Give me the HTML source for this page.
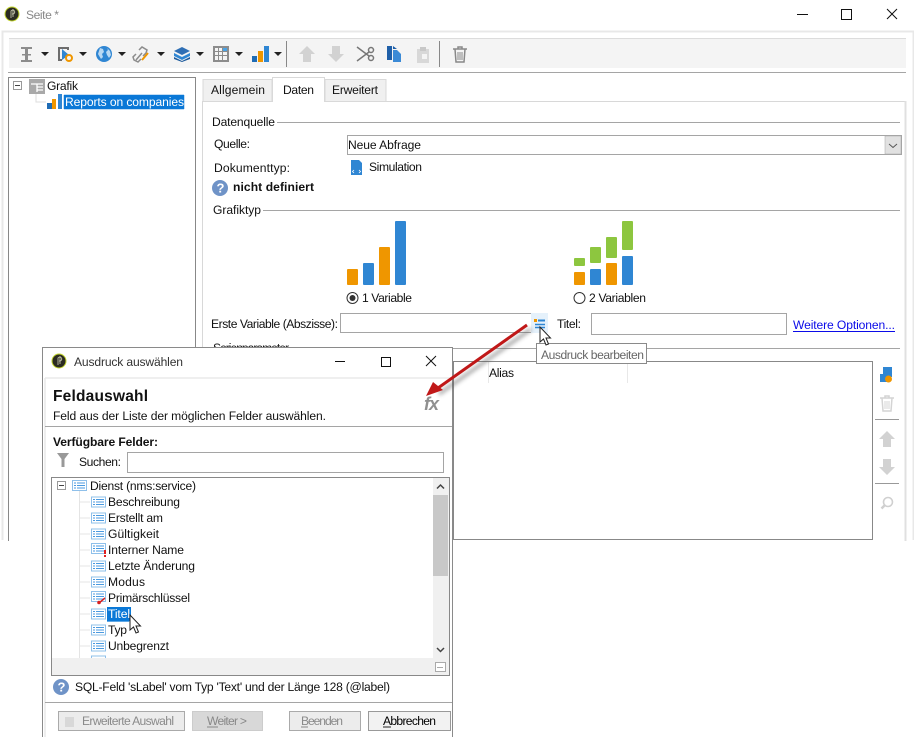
<!DOCTYPE html>
<html lang="de"><head><meta charset="utf-8"><title>Seite</title>
<style>
html,body{margin:0;padding:0;background:#fff;width:914px;height:737px;overflow:hidden}
svg{display:block;position:absolute;left:0;top:0}
text{font-family:"Liberation Sans",sans-serif;font-size:12.1px;fill:#111}
.b{font-weight:bold}
.g{fill:#888}
</style></head><body>
<svg width="914" height="737" viewBox="0 0 914 737" xmlns="http://www.w3.org/2000/svg">
<defs>
<filter id="sh" x="-20%" y="-20%" width="140%" height="140%"><feGaussianBlur stdDeviation="2"/></filter>
<g id="li"><rect x=".5" y=".5" width="14" height="10" fill="#fff" stroke="#8fc0ea"/><path d="M2 3h2M2 5.500h2M2 8h2M5 3h8M5 5.500h8M5 8h8" stroke="#4a9ae0" stroke-width="1"/></g>
<path id="dn" d="M0 0h8l-4 4z" fill="#222"/>
<path id="up" d="M8 0l8 8h-4v8H4V8H0z" fill="#d2d2d2"/>
<path id="do" d="M4 0h8v8h4l-8 8-8-8h4z" fill="#d2d2d2"/>
<g id="cur"><path d="M0 0v15l3.500-3 2.500 6 2.500-1-2.500-6h4.500z" fill="#fff" stroke="#222" stroke-width="1"/></g>
<g id="tr"><path d="M0 3h14M5 3V1h4v2M2 3l1 13h8l1-13" fill="none" stroke="currentColor" stroke-width="1.500"/><path d="M5 6v8M7 6v8M9 6v8" stroke="currentColor"/></g>
<g id="logo"><circle r="7.500" fill="#c3d52e"/><circle r="6.500" fill="#2b2b22"/><path d="M-1 4V-3a2 2 0 1 1 2 3H0M1 -5v8" stroke="#c0c0a8" fill="none" stroke-width=".9"/></g>
<g id="q"><circle r="8" fill="#6f93c7"/><text x="-3.500" y="4.500" style="font-size:13px;font-weight:bold;fill:#fff">?</text></g>
</defs>

<!-- main window -->
<use href="#logo" x="12" y="14"/>
<text x="26" y="19" class="g" textLength="33">Seite *</text>
<path d="M797 14.500h11" stroke="#111"/>
<rect x="841.500" y="9.500" width="10" height="10" fill="none" stroke="#111"/>
<path d="M887 9l10 10M897 9l-10 10" stroke="#111"/>
<path d="M2.500 540V31.500H913.500V540" fill="none" stroke="#e8e8e8" stroke-width="2"/>
<rect x="9" y="38" width="897" height="30" fill="#f4f4f4"/>
<path d="M9 38.500h897" stroke="#dcdcdc"/>
<path d="M8 72.500h898" stroke="#a5a5a5"/>

<!-- toolbar icons -->
<g>
<path d="M21 47h11v2h-4v5h3v1.500h-3V60h4v2H21v-2h4v-4.500h-3V54h3v-5h-4z" fill="#8c8c8c"/>
<use href="#dn" x="41" y="52"/>
<path d="M58 47h11v3h-2v-1h-7v10h2v2h-4z" fill="#6d6d6d"/><path d="M62 49l7 6-7 5z" fill="#2f86d3"/><circle cx="69" cy="58" r="3" fill="none" stroke="#ef9600" stroke-width="2"/>
<use href="#dn" x="79" y="52"/>
<circle cx="104" cy="54" r="8" fill="#2f86d3"/><path d="M100 48l3 1 1 3-2 2 1 3-2 2-3-5zM107 48l3 3 1 4-2 3-2-3-1-3 2-2z" fill="#b9d8f2"/>
<use href="#dn" x="118" y="52"/>
<path d="M136 60l6-7m-3-3l3-3 5 3-1 3-3 3m-2 3l-3 3-4-2-1-3 3-3" fill="none" stroke="#8c8c8c" stroke-width="1.500"/><path d="M142 60l6-7" stroke="#ef9600" stroke-width="2"/>
<use href="#dn" x="157" y="52"/>
<path d="M174 51l8-4 8 4-8 4z" fill="#2f6fb5"/><path d="M174 53v3l8 4 8-4v-3l-8 4z" fill="#2f86d3"/><path d="M174 57v2l8 3 8-3v-2l-8 4z" fill="#1c5a9c"/>
<use href="#dn" x="196" y="52"/>
<path d="M213 46h16v16h-16z" fill="#8c8c8c"/><path d="M215 48h3v3h-3zM219 48h3v3h-3zM215 52h3v3h-3zM219 52h3v3h-3zM223 52h4v3h-4zM215 56h3v4h-3zM219 56h3v4h-3zM223 56h4v4h-4z" fill="#f4f4f4"/><rect x="223" y="48" width="4" height="3" fill="#4aa3e6"/>
<use href="#dn" x="235" y="52"/>
<rect x="252" y="56" width="5" height="6" fill="#1f6cb5"/><rect x="258" y="51" width="5" height="11" fill="#ef9600"/><rect x="264" y="46" width="5" height="16" fill="#2f86d3"/>
<use href="#dn" x="274" y="52"/>
<path d="M286.500 41v26" stroke="#888"/>
<use href="#up" x="299" y="46"/>
<use href="#do" x="328" y="46"/>
<circle cx="371" cy="50" r="2.500" fill="none" stroke="#777" stroke-width="1.500"/><circle cx="371" cy="58" r="2.500" fill="none" stroke="#777" stroke-width="1.500"/><path d="M357 47l12 9M357 61l12-9" stroke="#777" stroke-width="1.500"/>
<path d="M387 46h5v14h-5z" fill="#1f5fa8"/><path d="M393 50h4l4 4v8h-8z" fill="#3b8ad6"/><path d="M393 46l4 3h-4z" fill="#1f5fa8"/>
<path d="M417 49h12v14h-12z" fill="#d8d8d8"/><path d="M420 47h6v4h-6z" fill="#c8c8c8"/><rect x="422" y="54" width="5" height="5" fill="#f4f4f4"/>
<path d="M439.500 41v26" stroke="#888"/>
<use href="#tr" x="453" y="46" color="#888"/>
</g>

<!-- tree -->
<rect x="8.500" y="77.500" width="187" height="470" fill="#fff" stroke="#888"/>
<rect x="13.500" y="81.500" width="8" height="8" fill="#fff" stroke="#999"/><path d="M15 85.500h5" stroke="#444"/>
<rect x="29" y="79" width="16" height="15" fill="#a9a9a9"/><path d="M31 84h12M37 84v8M37 87h6M37 90h6" stroke="#fff" stroke-width="1.300"/>
<path d="M36 94v8h10" fill="none" stroke="#ddd"/>
<text x="47" y="90" textLength="31">Grafik</text>
<rect x="47" y="103" width="5" height="6" fill="#1f6cb5"/><rect x="52" y="99" width="4" height="10" fill="#ef9600"/><rect x="58" y="94" width="4" height="15" fill="#2f86d3"/>
<rect x="63.500" y="94.500" width="121" height="15" fill="#0a78d7" stroke="#fff" stroke-dasharray="1 1"/>
<text x="65" y="106" style="fill:#fff" textLength="119">Reports on companies</text>

<!-- tabs -->
<rect x="202.500" y="101.500" width="703" height="450" fill="#fff" stroke="#d8d8d8"/>
<path d="M905.500 101v440" stroke="#e0e0e0" stroke-width="2"/>
<rect x="203" y="79.500" width="69" height="22" fill="#f0f0f0" stroke="#d9d9d9"/>
<rect x="325" y="79.500" width="61" height="22" fill="#f0f0f0" stroke="#d9d9d9"/>
<path d="M272.500 102V77.500h52V102" fill="#fff" stroke="#d9d9d9"/>
<text x="211" y="94" textLength="54">Allgemein</text>
<text x="283" y="94" textLength="31">Daten</text>
<text x="332" y="94" textLength="46">Erweitert</text>

<text x="212" y="126" textLength="63">Datenquelle</text>
<path d="M277 122.500h623" stroke="#a5a5a5"/>
<text x="214" y="148" textLength="36">Quelle:</text>
<rect x="347.500" y="135.500" width="554" height="19" fill="#fff" stroke="#a5a5a5"/>
<rect x="885" y="136" width="16" height="18" fill="#e1e1e1" stroke="#a5a5a5" stroke-width=".5"/>
<path d="M889 144l4 3.500 4-3.500" fill="none" stroke="#555"/>
<text x="348" y="149" textLength="73">Neue Abfrage</text>
<text x="214" y="172" textLength="76">Dokumenttyp:</text>
<path d="M351 160h8l3 3v12h-11z" fill="#2f86d3"/><path d="M354 170l-1.500 1.500 1.500 1.500M359 170l1.500 1.500-1.500 1.500" fill="none" stroke="#fff" stroke-width=".8"/>
<text x="369" y="171" textLength="53">Simulation</text>
<use href="#q" x="220" y="188"/>
<text x="233" y="191" class="b" textLength="81">nicht definiert</text>

<text x="213" y="214" textLength="48">Grafiktyp</text>
<path d="M263 210.500h637" stroke="#a5a5a5"/>

<g fill="#ef9600">
<rect x="347" y="269" width="11" height="16" rx="1"/><rect x="379" y="247" width="11" height="38" rx="1"/>
<rect x="574" y="272" width="11" height="13" rx="1"/><rect x="606" y="263" width="11" height="22" rx="1"/>
</g>
<g fill="#2f86d3">
<rect x="363" y="263" width="11" height="22" rx="1"/><rect x="395" y="221" width="11" height="64" rx="1"/>
<rect x="590" y="269" width="11" height="16" rx="1"/><rect x="622" y="256" width="11" height="29" rx="1"/>
</g>
<g fill="#8dc63f">
<rect x="574" y="258" width="11" height="8" rx="1"/><rect x="590" y="247" width="11" height="16" rx="1"/>
<rect x="606" y="237" width="11" height="21" rx="1"/><rect x="622" y="221" width="11" height="29" rx="1"/>
</g>
<circle cx="352.500" cy="298" r="5.500" fill="#fff" stroke="#333"/><circle cx="352.500" cy="298" r="3" fill="#333"/>
<text x="362" y="302" textLength="50">1 Variable</text>
<circle cx="579.500" cy="298" r="5.500" fill="#fff" stroke="#333"/>
<text x="589" y="302" textLength="57">2 Variablen</text>

<text x="211" y="328" textLength="127">Erste Variable (Abszisse):</text>
<rect x="340.500" y="313.500" width="192" height="19" fill="#fff" stroke="#a5a5a5"/>
<rect x="531" y="313" width="17" height="20" fill="#e5f1fb"/>
<rect x="534" y="319" width="3" height="3" fill="#ef9600"/><path d="M538 320.500h7" stroke="#2f86d3" stroke-width="2"/><path d="M535 324.500h10M535 327.500h10" stroke="#2f86d3" stroke-width="1.500"/>
<text x="557" y="328" textLength="24">Titel:</text>
<rect x="591.500" y="313.500" width="195" height="21" fill="#fff" stroke="#a5a5a5"/>
<text x="793" y="329" style="fill:#0b0be8" textLength="102">Weitere Optionen...</text>
<path d="M793 331.500h102" stroke="#0b0be8"/>

<path d="M213 348.500h687" stroke="#a5a5a5"/>
<rect x="213" y="340" width="90" height="9" fill="#fff"/>
<text x="213" y="352" textLength="76">Serienparameter</text>

<!-- table -->
<rect x="453.500" y="361.500" width="419" height="178" fill="#fff" stroke="#888"/>
<path d="M488.500 362v21M627.500 362v21" stroke="#e8e8e8"/>
<text x="489" y="377" textLength="25">Alias</text>

<!-- right icons -->
<path d="M880 374h3v-7h9v10h-3v5h-9z" fill="#2f86d3"/><path d="M883 367v5h-3z" fill="#fff"/>
<circle cx="888.500" cy="379" r="3.500" fill="#ef9600"/>
<use href="#tr" x="880" y="395" color="#d4d4d4"/>
<path d="M875 419.500h24M875 483.500h24" stroke="#999"/>
<use href="#up" x="879" y="431"/>
<use href="#do" x="879" y="459"/>
<circle cx="888" cy="502" r="4.500" fill="none" stroke="#d0d0d0" stroke-width="1.600"/><path d="M884.500 505.500l-3 3" stroke="#d0d0d0" stroke-width="2.500"/>

<!-- clear area under main window -->
<rect x="0" y="541" width="914" height="196" fill="#fff"/>

<!-- tooltip & cursor -->
<rect x="536.500" y="343.500" width="110" height="20" fill="#fff" stroke="#8a8a8a"/>
<text x="541" y="359" style="fill:#666" textLength="103">Ausdruck bearbeiten</text>
<use href="#cur" x="540" y="327"/>

<!-- dialog -->
<rect x="42.500" y="347.500" width="410" height="400" fill="#fff" stroke="#8a8a8a"/>
<use href="#logo" x="59" y="361"/>
<text x="74" y="366" style="fill:#333" textLength="109">Ausdruck auswählen</text>
<path d="M335 361.500h10" stroke="#111"/>
<rect x="381.500" y="357.500" width="9" height="9" fill="none" stroke="#111"/>
<path d="M426 356l10 10M436 356l-10 10" stroke="#111"/>
<path d="M45 378h407" stroke="#efefef" stroke-width="2"/>
<path d="M45 378v360" stroke="#e8e8e8" stroke-width="1.500"/>
<text x="53" y="401" class="b" style="font-size:15.500px" textLength="95">Feldauswahl</text>
<text x="53" y="420" textLength="273">Feld aus der Liste der möglichen Felder auswählen.</text>
<path d="M45 426.500h407" stroke="#a5a5a5"/>
<text x="424" y="410" style="font-size:18px;font-style:italic;font-weight:bold;fill:#909090" textLength="15">fx</text>
<text x="53" y="446" class="b" textLength="105">Verfügbare Felder:</text>
<path d="M57 453h12l-4.500 6v8h-3v-8z" fill="#999"/>
<text x="79" y="466" textLength="42">Suchen:</text>
<rect x="127.500" y="452.500" width="316" height="20" fill="#fff" stroke="#a5a5a5"/>

<!-- field tree -->
<rect x="51.500" y="477.500" width="398" height="198" fill="#fff" stroke="#888"/>
<rect x="433" y="478" width="16" height="180" fill="#f0f0f0"/>
<rect x="433" y="495" width="15" height="81" fill="#c8c8c8"/>
<path d="M437 488.500l3.500-3.500 3.500 3.500M437 648l3.500 3.500 3.500-3.500" fill="none" stroke="#444" stroke-width="1.500"/>
<rect x="52" y="658" width="397" height="17" fill="#f0f0f0"/>
<rect x="435.500" y="662.500" width="10" height="9" fill="#fff" stroke="#aaa"/><path d="M437.500 667.500h6" stroke="#555" stroke-dasharray="1 1"/>
<rect x="57.500" y="481.500" width="8" height="8" fill="#fff" stroke="#999"/><path d="M59 485.500h5" stroke="#444"/>
<path d="M79.500 490v168M79 502h11M79 518h11M79 534h11M79 550h11M79 566h11M79 582h11M79 598h11M79 614h11M79 630h11M79 646h11" stroke="#e4e4e4" fill="none"/>
<use href="#li" x="72" y="480"/>
<text x="90" y="490" textLength="106">Dienst (nms:service)</text>
<use href="#li" x="91" y="496.500"/><text x="108" y="506" textLength="72">Beschreibung</text>
<use href="#li" x="91" y="512.500"/><text x="108" y="522" textLength="55">Erstellt am</text>
<use href="#li" x="91" y="528.500"/><text x="108" y="538" textLength="51">Gültigkeit</text>
<use href="#li" x="91" y="543"/><rect x="104" y="550" width="2" height="4" fill="#e02020"/><rect x="104" y="555" width="2" height="2" fill="#e02020"/><text x="108" y="554" textLength="76">Interner Name</text>
<use href="#li" x="91" y="560.500"/><text x="108" y="570" textLength="87">Letzte Änderung</text>
<use href="#li" x="91" y="576.500"/><text x="108" y="586" textLength="37">Modus</text>
<use href="#li" x="91" y="591"/><path d="M99 603l6-5" stroke="#d82020" stroke-width="1.500"/><circle cx="99" cy="602.500" r="1.800" fill="#d82020"/><text x="108" y="602" textLength="82">Primärschlüssel</text>
<use href="#li" x="91" y="608.500"/>
<rect x="107" y="607" width="24" height="15" fill="#0a78d7"/><rect x="106.500" y="606.500" width="25" height="15" fill="none" stroke="#fff" stroke-dasharray="1 1" opacity=".7"/>
<text x="108" y="618" style="fill:#fff" textLength="22">Titel</text>
<use href="#li" x="91" y="624.500"/><text x="108" y="634" textLength="19">Typ</text>
<use href="#li" x="91" y="640.500"/><text x="108" y="650" textLength="61">Unbegrenzt</text>
<path d="M91.500 658v-2h14v2" fill="none" stroke="#8fc0ea"/>
<use href="#cur" x="130" y="615"/>

<use href="#q" x="61" y="687"/>
<text x="75" y="691" textLength="315">SQL-Feld 'sLabel' vom Typ 'Text' und der Länge 128 (@label)</text>
<path d="M45 702.500h407" stroke="#a5a5a5"/>

<rect x="58.500" y="711.500" width="126" height="19" fill="#ececec" stroke="#aaa"/>
<path d="M65 717h9v10h-9z" fill="#d8d8d8"/>
<text x="82" y="725" style="fill:#8a8a8a" textLength="92">Erweiterte Auswahl</text>
<rect x="192.500" y="711.500" width="70" height="19" fill="#d8d8d8" stroke="#ccc"/>
<text x="207" y="725" style="fill:#888" textLength="40">Weiter &gt;</text>
<path d="M207 727h11" stroke="#888"/>
<rect x="289.500" y="711.500" width="71" height="19" fill="#ececec" stroke="#aaa"/>
<text x="301" y="725" style="fill:#8a8a8a" textLength="42">Beenden</text>
<path d="M301 727h7" stroke="#888"/>
<rect x="368.500" y="711.500" width="82" height="19" fill="#f2f2f2" stroke="#999"/>
<text x="383" y="725" style="fill:#000" textLength="53">Abbrechen</text>
<path d="M383 727h8" stroke="#222"/>

<!-- red arrow -->
<g filter="url(#sh)" opacity=".6" transform="translate(4 4)">
<path d="M527 325L435 390" stroke="#555" stroke-width="3"/>
</g>
<path d="M527 325L438 388" stroke="#c01818" stroke-width="3"/>
<path d="M426 396l7-14 10 8z" fill="#c01818"/>
</svg>
</body></html>
